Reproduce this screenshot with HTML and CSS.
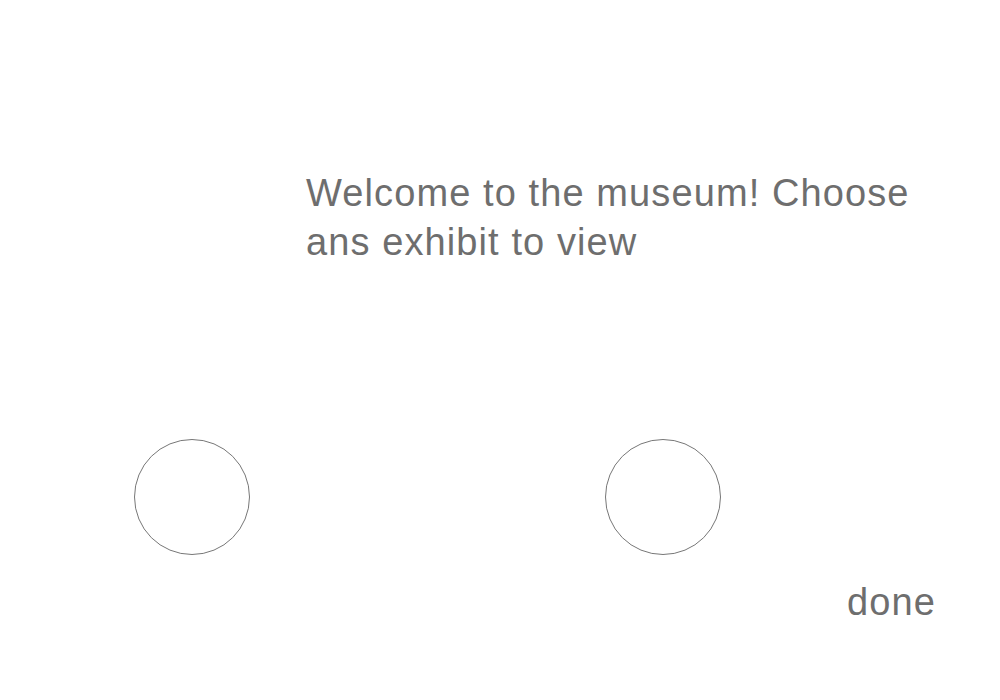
FILE: index.html
```html
<!DOCTYPE html>
<html>
<head>
<meta charset="utf-8">
<link rel="stylesheet" href="styles.css">
</head>
<body>
<main class="screen">
  <p class="welcome">Welcome to the museum! Choose ans exhibit to view</p>
  <div class="exhibits">
    <div class="exhibit"></div>
    <div class="exhibit"></div>
  </div>
  <div class="footer"><span class="done">done</span></div>
</main>
</body>
</html>
```

FILE: styles.css
```css
html, body {
  margin: 0;
  padding: 0;
  background: #ffffff;
}
.screen {
  width: 1000px;
  height: 700px;
  display: flex;
  flex-direction: column;
  font-family: "Liberation Sans", Arial, sans-serif;
  color: #6e6e6e;
  letter-spacing: 1.1px;
}
.welcome {
  margin: 169px 0 0 306px;
  width: 640px;
  font-size: 38px;
  line-height: 49px;
}
.exhibits {
  display: flex;
  gap: 355px;
  margin: 172px 0 0 134px;
}
.exhibit {
  width: 114px;
  height: 114px;
  border: 1px solid #777777;
  border-radius: 50%;
}
.footer {
  display: flex;
  justify-content: flex-end;
  padding-right: 64px;
  margin-top: 23px;
}
.done {
  font-size: 38px;
  line-height: 49px;
}
```
